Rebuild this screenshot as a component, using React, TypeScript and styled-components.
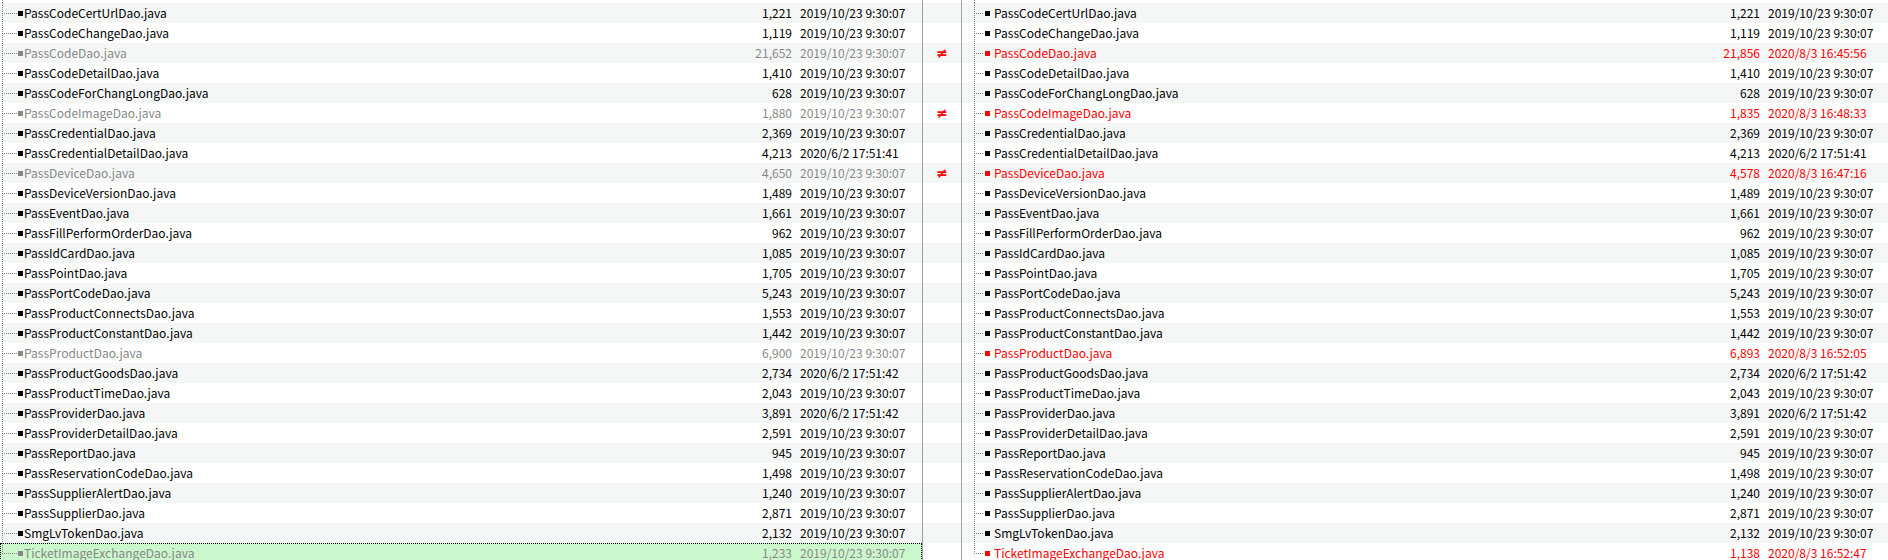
import React from 'react';
import styled, { createGlobalStyle } from 'styled-components';

const GlobalStyle = createGlobalStyle`
  html, body { margin: 0; padding: 0; background: #ffffff; }
  body {
    font-family: "Noto Sans CJK SC", "Noto Sans", sans-serif;
    font-size: 12px;
    color: #000000;
  }
`;

type Tone = 'normal' | 'muted' | 'changed';

interface Entry {
  name: string;
  lSize: string;
  lDate: string;
  rSize: string;
  rDate: string;
  left: Tone;
  right: Tone;
  neq?: boolean;
  selected?: boolean;
}

const D = '2019/10/23 9:30:07';

const same = (name: string, size: string, date: string = D): Entry => ({
  name,
  lSize: size,
  lDate: date,
  rSize: size,
  rDate: date,
  left: 'normal',
  right: 'normal',
});

const rows: Entry[] = [
  same('PassCodeCertUrlDao.java', '1,221'),
  same('PassCodeChangeDao.java', '1,119'),
  { name: 'PassCodeDao.java', lSize: '21,652', lDate: D, rSize: '21,856', rDate: '2020/8/3 16:45:56', left: 'muted', right: 'changed', neq: true },
  same('PassCodeDetailDao.java', '1,410'),
  same('PassCodeForChangLongDao.java', '628'),
  { name: 'PassCodeImageDao.java', lSize: '1,880', lDate: D, rSize: '1,835', rDate: '2020/8/3 16:48:33', left: 'muted', right: 'changed', neq: true },
  same('PassCredentialDao.java', '2,369'),
  same('PassCredentialDetailDao.java', '4,213', '2020/6/2 17:51:41'),
  { name: 'PassDeviceDao.java', lSize: '4,650', lDate: D, rSize: '4,578', rDate: '2020/8/3 16:47:16', left: 'muted', right: 'changed', neq: true },
  same('PassDeviceVersionDao.java', '1,489'),
  same('PassEventDao.java', '1,661'),
  same('PassFillPerformOrderDao.java', '962'),
  same('PassIdCardDao.java', '1,085'),
  same('PassPointDao.java', '1,705'),
  same('PassPortCodeDao.java', '5,243'),
  same('PassProductConnectsDao.java', '1,553'),
  same('PassProductConstantDao.java', '1,442'),
  { name: 'PassProductDao.java', lSize: '6,900', lDate: D, rSize: '6,893', rDate: '2020/8/3 16:52:05', left: 'muted', right: 'changed' },
  same('PassProductGoodsDao.java', '2,734', '2020/6/2 17:51:42'),
  same('PassProductTimeDao.java', '2,043'),
  same('PassProviderDao.java', '3,891', '2020/6/2 17:51:42'),
  same('PassProviderDetailDao.java', '2,591'),
  same('PassReportDao.java', '945'),
  same('PassReservationCodeDao.java', '1,498'),
  same('PassSupplierAlertDao.java', '1,240'),
  same('PassSupplierDao.java', '2,871'),
  same('SmgLvTokenDao.java', '2,132'),
  { name: 'TicketImageExchangeDao.java', lSize: '1,233', lDate: D, rSize: '1,138', rDate: '2020/8/3 16:52:47', left: 'muted', right: 'changed', selected: true },
];

const toneColor = (t: Tone) => (t === 'muted' ? '#878787' : t === 'changed' ? '#ff0000' : '#000000');

const Window = styled.div`
  display: flex;
  width: 1888px;
  height: 560px;
  overflow: hidden;
  background: #ffffff;
`;

const Panel = styled.div<{ $width?: number }>`
  display: flex;
  flex-direction: column;
  ${(p) => (p.$width ? `width: ${p.$width}px; flex: none;` : 'flex: 1;')}
  border-right: 1px solid #a0a0a0;
  &:last-child { border-right: none; }
`;

const Spacer = styled.div<{ $indent: number }>`
  display: flex;
  height: 3px;
  padding-left: ${(p) => p.$indent}px;
  flex: none;
`;

const Row = styled.div<{ $odd: boolean; $selected?: boolean }>`
  display: flex;
  align-items: center;
  height: 20px;
  flex: none;
  line-height: 20px;
  white-space: nowrap;
  background: ${(p) => (p.$selected ? '#ccf7cc' : p.$odd ? '#ffffff' : '#f5f7f7')};
  outline: ${(p) => (p.$selected ? '1px dotted #000000' : 'none')};
  outline-offset: -1px;
`;

const Guide = styled.div<{ $indent: number }>`
  display: flex;
  align-self: stretch;
  align-items: center;
  padding-left: ${(p) => p.$indent}px;
  flex: none;
`;

const VLine = styled.div<{ $half?: boolean }>`
  width: 1px;
  align-self: flex-start;
  height: ${(p) => (p.$half ? '11px' : '100%')};
  background-image: linear-gradient(to bottom, #808080 50%, transparent 50%);
  background-size: 1px 2px;
  flex: none;
`;

const HDots = styled.div<{ $len: number }>`
  width: ${(p) => p.$len}px;
  height: 1px;
  margin-top: 1px;
  background-image: linear-gradient(to right, transparent 50%, #808080 50%);
  background-size: 2px 1px;
  flex: none;
`;

const Square = styled.span<{ $tone: Tone; $gapL: number; $gapR: number }>`
  display: inline-block;
  width: 5px;
  height: 5px;
  margin: 1px ${(p) => p.$gapR}px 0 ${(p) => p.$gapL}px;
  background: ${(p) => toneColor(p.$tone)};
  flex: none;
`;

const Name = styled.span<{ $tone: Tone }>`
  flex: 1;
  min-width: 0;
  overflow: hidden;
  color: ${(p) => toneColor(p.$tone)};
`;

const Size = styled.span<{ $tone: Tone }>`
  width: 60px;
  text-align: right;
  flex: none;
  color: ${(p) => toneColor(p.$tone)};
`;

const DateCell = styled.span<{ $tone: Tone; $width: number }>`
  width: ${(p) => p.$width}px;
  padding-left: 8px;
  box-sizing: border-box;
  flex: none;
  color: ${(p) => toneColor(p.$tone)};
`;

const Neq = styled.span`
  flex: 1;
  text-align: center;
  color: #ff0000;
  font-family: "DejaVu Sans", sans-serif;
  font-weight: bold;
  font-size: 14px;
`;

interface SideProps {
  side: 'left' | 'right';
}

const Side: React.FC<SideProps> = ({ side }) => {
  const isLeft = side === 'left';
  const indent = isLeft ? 2 : 12;
  const dots = isLeft ? 14 : 9;
  const gapL = 1;
  const gapR = isLeft ? 1 : 4;
  const dateWidth = isLeft ? 130 : 128;
  return (
    <Panel $width={isLeft ? 922 : undefined}>
      <Spacer $indent={indent}>
        <VLine />
      </Spacer>
      {rows.map((r, i) => {
        const tone = isLeft ? r.left : r.right;
        const last = i === rows.length - 1;
        return (
          <Row key={r.name} $odd={i % 2 === 1} $selected={isLeft && r.selected}>
            <Guide $indent={indent}>
              <VLine $half={last} />
              <HDots $len={dots} />
              <Square $tone={tone} $gapL={gapL} $gapR={gapR} />
            </Guide>
            <Name $tone={tone}>{r.name}</Name>
            <Size $tone={tone}>{isLeft ? r.lSize : r.rSize}</Size>
            <DateCell $tone={tone} $width={dateWidth}>
              {isLeft ? r.lDate : r.rDate}
            </DateCell>
          </Row>
        );
      })}
    </Panel>
  );
};

const Middle: React.FC = () => (
  <Panel $width={38}>
    <Spacer $indent={0} />
    {rows.map((r, i) => (
      <Row key={r.name} $odd={i % 2 === 1}>
        {r.neq ? <Neq>≠</Neq> : null}
      </Row>
    ))}
  </Panel>
);

export default function App() {
  return (
    <>
      <GlobalStyle />
      <Window>
        <Side side="left" />
        <Middle />
        <Side side="right" />
      </Window>
    </>
  );
}
